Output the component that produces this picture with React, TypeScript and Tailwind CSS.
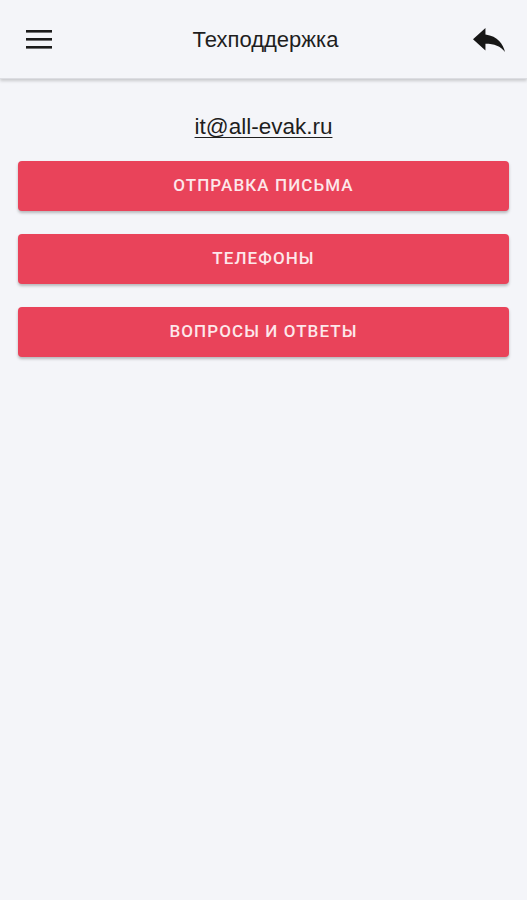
import React from "react";

function Btn({ label }: { label: string }) {
  return (
    <button className="h-[50px] w-full rounded-[4px] bg-[#e9435a] text-[17px] font-medium uppercase tracking-[1.1px] text-[#fde7ea] shadow-[0_2px_3px_rgba(0,0,0,0.25)]">
      {label}
    </button>
  );
}

export default function App() {
  return (
    <div
      className="min-h-[900px] w-full bg-[#f4f5f9]"
      style={{ fontFamily: "Roboto, 'Noto Sans', sans-serif" }}
    >
      <header className="flex h-[79px] items-center justify-between bg-[#f4f5f9] px-[26px] shadow-[0_2px_3px_rgba(0,0,0,0.18)] border-b border-[#dcdde2]">
        <svg width="26" height="19" viewBox="0 0 26 19" className="mt-[1px]">
          <rect x="0" y="0" width="26" height="2.6" fill="#1b1b1b" />
          <rect x="0" y="8" width="26" height="2.6" fill="#1b1b1b" />
          <rect x="0" y="16" width="26" height="2.6" fill="#1b1b1b" />
        </svg>
        <h1
          className="text-[22px] font-normal text-[#1e1e1e] ml-[6px]"
          style={{ fontFamily: "'Liberation Sans', Arial, sans-serif" }}
        >
          Техподдержка
        </h1>
        <svg
          width="32"
          height="24"
          viewBox="3 5 18 15"
          preserveAspectRatio="none"
          className="mr-[-4px] mt-[1px]"
        >
          <path d="M10 9V5l-7 7 7 7v-4.1c5 0 8.5 1.6 11 5.1-1-5-4-10-11-11z" fill="#161616" />
        </svg>
      </header>
      <div className="flex flex-col items-center px-[18px] pt-[34px]">
        <a
          className="text-[22.5px] leading-[28px] text-[#1e1e1e] underline decoration-[1px] underline-offset-[3px]"
          style={{ fontFamily: "'Liberation Sans', Arial, sans-serif" }}
        >
          it@all-evak.ru
        </a>
        <div className="mt-[20px] flex w-full flex-col gap-[23px]">
          <Btn label="Отправка письма" />
          <Btn label="Телефоны" />
          <Btn label="Вопросы и ответы" />
        </div>
      </div>
    </div>
  );
}
